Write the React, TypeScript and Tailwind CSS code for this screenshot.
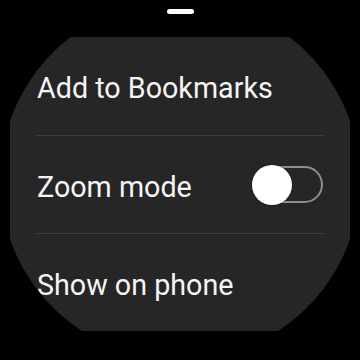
import React, { useState } from 'react';

const Divider = () => <div className="mx-[26px] h-px bg-[#3c3c3c]" />;

export default function App() {
  const [zoom, setZoom] = useState(false);

  return (
    <div className="w-[360px] h-[360px] bg-black flex flex-col items-center overflow-hidden font-['Roboto',sans-serif] text-[#f5f5f5]">
      {/* page indicator */}
      <div className="mt-[9px] w-[27px] h-[5px] rounded-full bg-white shrink-0" />

      <div className="mt-[23px] w-[340px] h-[294px] bg-[#262626] flex flex-col [clip-path:circle(180px_at_170px_143px)]">
        <div className="h-[98px] flex items-center px-[27px] pt-[5px] text-[28.7px] leading-none">
          Add to Bookmarks
        </div>
        <Divider />
        <div className="h-[97px] flex items-center justify-between px-[27px] text-[28.7px] leading-none">
          <span className="pt-[5px]">Zoom mode</span>
          <button
            onClick={() => setZoom(!zoom)}
            className="relative w-[71px] h-[37px] rounded-full border-2 border-[#8e8e8e]"
          >
            <span className="absolute left-[-2px] top-[-3px] w-[40px] h-[40px] rounded-full bg-white shadow-[0_0_2px_rgba(0,0,0,0.6)]" />
          </button>
        </div>
        <Divider />
        <div className="h-[97px] flex items-center px-[27px] pt-[5px] text-[28.7px] leading-none">
          Show on phone
        </div>
      </div>
    </div>
  );
}
